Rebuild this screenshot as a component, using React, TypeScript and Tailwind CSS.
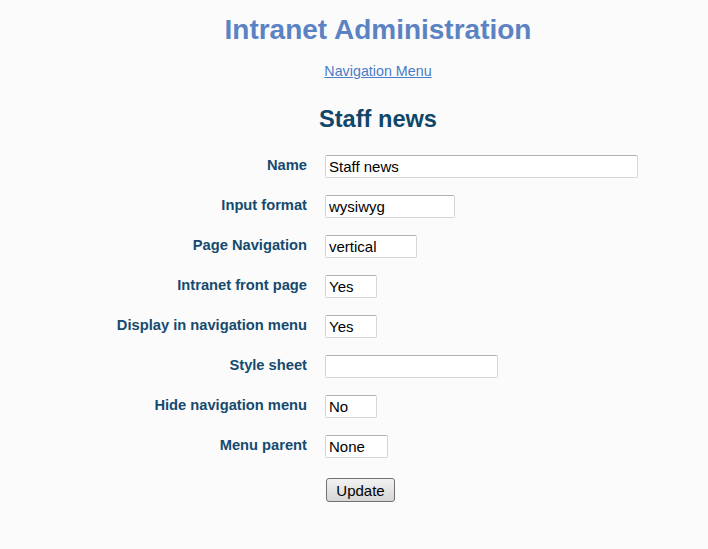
import type { ReactNode } from "react";

const FIELDS: { label: string; value: string; width: string }[] = [
  { label: "Name", value: "Staff news", width: "w-[313px]" },
  { label: "Input format", value: "wysiwyg", width: "w-[130px]" },
  { label: "Page Navigation", value: "vertical", width: "w-[92px]" },
  { label: "Intranet front page", value: "Yes", width: "w-[52px]" },
  { label: "Display in navigation menu", value: "Yes", width: "w-[52px]" },
  { label: "Style sheet", value: "", width: "w-[173px]" },
  { label: "Hide navigation menu", value: "No", width: "w-[52px]" },
  { label: "Menu parent", value: "None", width: "w-[63px]" },
];

function Row({ label, children }: { label: string; children: ReactNode }) {
  return (
    <div className="flex h-[40px] items-start">
      <label className="w-[307px] text-right text-[14.7px] leading-5 font-bold text-[#154a6f]">{label}</label>
      <div className="ml-[18px]">{children}</div>
    </div>
  );
}

export default function App() {
  return (
    <div className="min-h-[549px] bg-[#fbfbfb] font-['Liberation_Sans',Arial,sans-serif]">
      <div className="flex flex-col items-center pt-[14px] pl-[48px]">
        <h1 className="text-[28px] leading-8 font-bold text-[#5b83c4]">Intranet Administration</h1>
        <a href="#" className="mt-[15px] text-[14.3px] leading-5 text-[#4b7cc7] underline">
          Navigation Menu
        </a>
        <h2 className="mt-[24px] text-[23.6px] leading-7 font-bold text-[#0f4669]">Staff news</h2>
      </div>

      <form className="mt-[22px]" onSubmit={(e) => e.preventDefault()}>
        {FIELDS.map((f) => (
          <Row key={f.label} label={f.label}>
            <input
              type="text"
              defaultValue={f.value}
              className={`${f.width} h-[23px] rounded-[2px] border border-[#d3d6db] border-t-[#adb0b5] bg-white px-[3px] text-[15px] text-black outline-none`}
            />
          </Row>
        ))}
        <div className="flex pt-[3px]">
          <div className="w-[307px]" />
          <button
            type="submit"
            className="ml-[19px] h-[24px] w-[69px] rounded-[3px] border border-[#707070] bg-gradient-to-b from-[#f2f2f2] to-[#d6d6d6] text-[15px] leading-none text-black"
          >
            Update
          </button>
        </div>
      </form>
    </div>
  );
}
